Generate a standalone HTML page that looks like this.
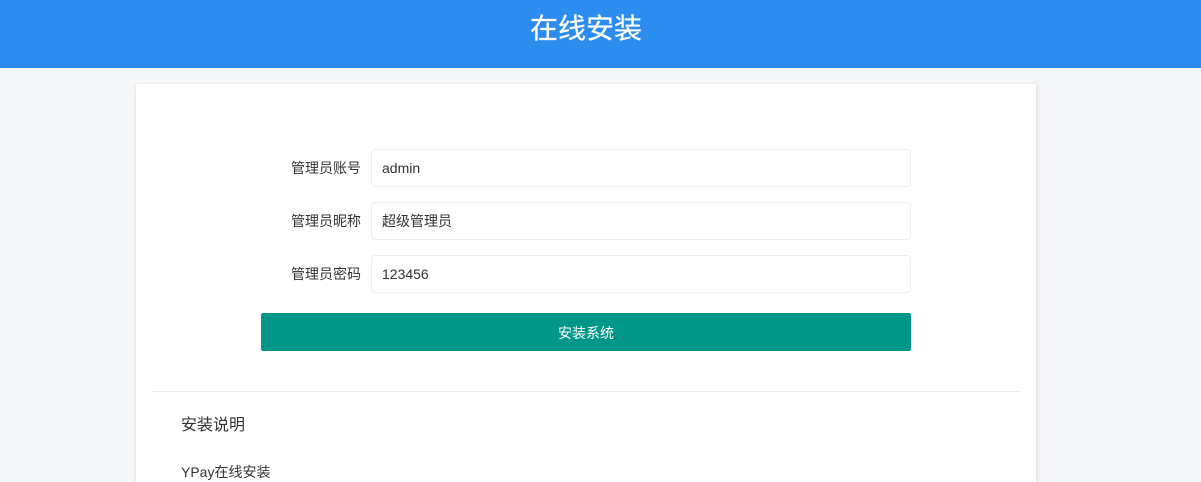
<!DOCTYPE html>
<html lang="zh">
<head>
<meta charset="utf-8">
<title>在线安装</title>
<style>
html,body{margin:0;padding:0;width:1201px;height:482px;overflow:hidden;background:#f5f6f8;font-family:"Liberation Sans","Noto Sans CJK SC",sans-serif;color:#333;}
.wrap{position:relative;width:1201px;height:482px;overflow:hidden;}
.abs{position:absolute;white-space:nowrap;}
.head{position:absolute;left:0;top:0;width:1201px;height:68px;background:#2d8cf0;}
.title{left:530px;top:11px;font-size:28px;line-height:36px;color:#fff;-webkit-text-stroke:.25px #fff;}
.card{position:absolute;left:136px;top:84px;width:900px;height:420px;background:#fff;border-radius:2px;box-shadow:0 1px 4px rgba(0,0,0,.1),2px 2px 6px rgba(0,0,0,.04);}
.label{width:120px;left:241px;text-align:right;font-size:14px;line-height:20px;color:#333;}
.input{position:absolute;left:371px;width:538px;height:36px;border:1px solid #eee;border-radius:4px;background:#fff;}
.val{left:382px;font-size:14px;line-height:20px;color:#333;}
.btn{position:absolute;left:261px;top:313px;width:650px;height:38px;background:#009688;border-radius:2px;}
.btntxt{left:261px;width:650px;top:323px;text-align:center;font-size:14px;line-height:20px;color:#fff;}
.hr{position:absolute;left:151px;top:391px;width:870px;height:1px;background:#eee;}
.h2{left:181px;top:415px;font-size:16px;line-height:22px;color:#333;}
.p{left:181px;top:462px;font-size:14px;line-height:20px;color:#333;}
</style>
</head>
<body>
<div class="wrap">
<div class="head"></div>
<div class="abs title">在线安装</div>
<div class="card"></div>

<div class="abs label" style="top:158px">管理员账号</div>
<div class="input" style="top:149px"></div>
<div class="abs val" style="top:158px">admin</div>

<div class="abs label" style="top:211px">管理员昵称</div>
<div class="input" style="top:202px"></div>
<div class="abs val" style="top:211px">超级管理员</div>

<div class="abs label" style="top:264px">管理员密码</div>
<div class="input" style="top:255px"></div>
<div class="abs val" style="top:264px">123456</div>

<div class="btn"></div>
<div class="abs btntxt">安装系统</div>

<div class="hr"></div>
<div class="abs h2">安装说明</div>
<div class="abs p">YPay在线安装</div>
</div>
</body>
</html>
